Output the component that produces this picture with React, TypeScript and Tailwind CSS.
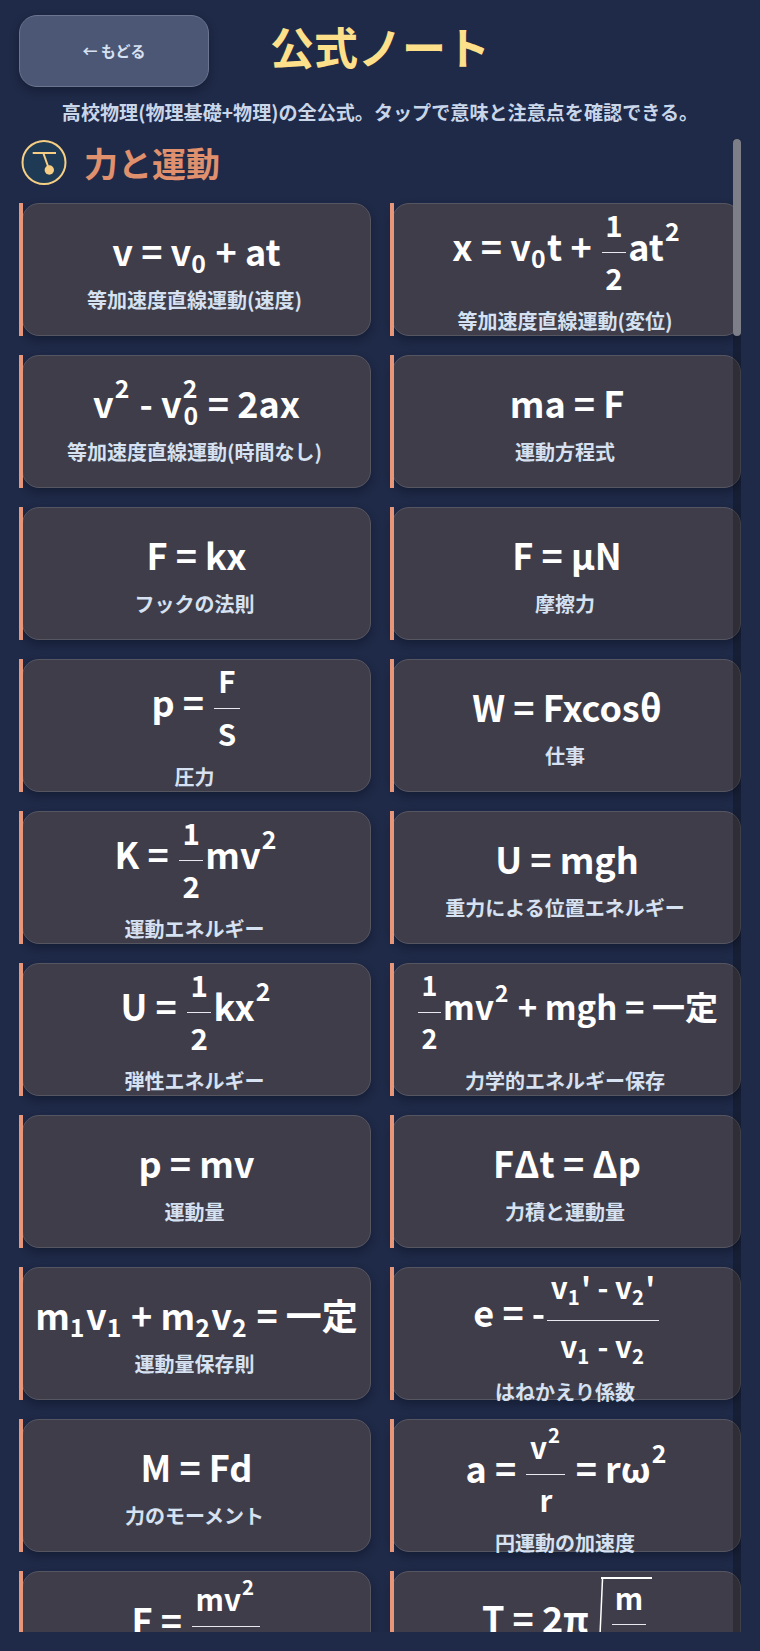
import React from 'react';

const Sub = ({ children }: { children: React.ReactNode }) => (
  <span className="mr-[1.5px] text-[0.69em] font-bold leading-[0] align-[-0.28em]">{children}</span>
);

const Sup = ({ children }: { children: React.ReactNode }) => (
  <span className="ml-[1px] mr-[2px] text-[0.69em] font-bold leading-[0] align-[0.8em]">{children}</span>
);

// numerator / denominator boxes are sized so the rule sits where the reference has it
const fracKinds = {
  plain: { wrap: 'align-[24px]', num: 'h-[46px] leading-[38px]', den: 'h-[47px] leading-[50px] -mb-[6px]' },
  sup: { wrap: 'align-[24px]', num: 'h-[58px] leading-[62px]', den: 'h-[47px] leading-[50px] -mb-[6px]' },
  sub: { wrap: 'align-[28px]', num: 'h-[57px] leading-[48px]', den: 'h-[50px] leading-[50px] -mb-[6px]' },
};

const Frac = ({ top, bottom, kind = 'plain' }: { top: React.ReactNode; bottom: React.ReactNode; kind?: keyof typeof fracKinds }) => (
  <span className={`inline-flex flex-col items-center ml-[2px] mr-[2px] text-[0.82em] ${fracKinds[kind].wrap}`}>
    <span className={`px-[3.5px] ${fracKinds[kind].num} whitespace-nowrap`}>{top}</span>
    <span className="h-px w-full bg-[#e8e8ee]" />
    <span className={`px-[3.5px] ${fracKinds[kind].den} whitespace-nowrap`}>{bottom}</span>
  </span>
);

const half = <Frac top="1" bottom="2" />;

const Card = ({ formula, label, size = 'text-[36px]' }: { formula: React.ReactNode; label: string; size?: string }) => (
  <div className="relative h-[133px]">
    <div className="ml-[2.5px] h-full rounded-[17px] border border-[#565661] bg-[#3f3d49] pr-[3px] pt-[3px] shadow-[0_4px_8px_rgba(10,15,30,0.45)] flex flex-col items-center justify-center">
      <div className={`pl-[4px] ${size} leading-[46px] font-bold text-white whitespace-nowrap`}>{formula}</div>
      <div className="mt-[12px] text-[20px] leading-[30px] font-bold text-[#d6e1f1] whitespace-nowrap">{label}</div>
    </div>
    <div className="absolute left-0 top-0 bottom-0 w-[4px] bg-[#e8967a]" />
  </div>
);

const formulas: { formula: React.ReactNode; label: string; size?: string }[] = [
  { formula: <>v = v<Sub>0</Sub> + at</>, label: '等加速度直線運動(速度)' },
  { formula: <>x = v<Sub>0</Sub>t + {half}at<Sup>2</Sup></>, label: '等加速度直線運動(変位)' },
  {
    formula: (
      <>
        v<Sup>2</Sup> - v
        <span className="ml-[1px] -mr-[14px] text-[0.69em] font-bold leading-[0] align-[0.8em]">2</span>
        <Sub>0</Sub> = 2ax
      </>
    ),
    label: '等加速度直線運動(時間なし)',
  },
  { formula: 'ma = F', label: '運動方程式' },
  { formula: 'F = kx', label: 'フックの法則' },
  { formula: 'F = μN', label: '摩擦力' },
  { formula: <>p = <Frac top="F" bottom="S" /></>, label: '圧力' },
  { formula: 'W = Fxcosθ', label: '仕事' },
  { formula: <>K = {half}mv<Sup>2</Sup></>, label: '運動エネルギー' },
  { formula: 'U = mgh', label: '重力による位置エネルギー' },
  { formula: <>U = {half}kx<Sup>2</Sup></>, label: '弾性エネルギー' },
  { formula: <>{half}mv<Sup>2</Sup> + mgh = 一定</>, label: '力学的エネルギー保存', size: 'text-[33px]' },
  { formula: 'p = mv', label: '運動量' },
  { formula: 'FΔt = Δp', label: '力積と運動量' },
  { formula: <>m<Sub>1</Sub>v<Sub>1</Sub> + m<Sub>2</Sub>v<Sub>2</Sub> = 一定</>, label: '運動量保存則' },
  { formula: <>e = -<Frac kind="sub" top={<>v<Sub>1</Sub>' - v<Sub>2</Sub>'</>} bottom={<>v<Sub>1</Sub> - v<Sub>2</Sub></>} /></>, label: 'はねかえり係数' },
  { formula: 'M = Fd', label: '力のモーメント' },
  { formula: <>a = <Frac kind="sup" top={<>v<Sup>2</Sup></>} bottom="r" /> = rω<Sup>2</Sup></>, label: '円運動の加速度' },
  { formula: <>F = <Frac kind="sup" top={<>mv<Sup>2</Sup></>} bottom="r" /></>, label: '向心力' },
  {
    formula: (
      <>
        T = 2π
        <span className="inline-flex flex-col ml-[12px] pt-[6px] text-[0.82em] align-[23px]">
          <span className="relative flex flex-col items-center border-t-2 border-white pl-[11px] pr-[6px]">
            <svg width="7" height="90" viewBox="0 0 7 90" className="absolute -left-[4px] top-0">
              <path d="M5.5 0 L1.5 90" fill="none" stroke="#fff" strokeWidth="1.5" />
            </svg>
            <span className="px-[3px] h-[45px] leading-[38px]">m</span>
            <span className="h-px w-full bg-[#e8e8ee]" />
            <span className="px-[3px] h-[41px] leading-[50px]">k</span>
          </span>
        </span>
      </>
    ),
    label: '単振り子の周期',
  },
];

export default function App() {
  return (
    <div className="h-[1651px] overflow-hidden bg-[#1f2a48] px-[19px] pt-[15px] font-['Noto_Sans_CJK_JP','Noto_Sans',sans-serif]">
      <div className="flex items-center">
        <button className="w-[190px] h-[72px] shrink-0 rounded-[18px] border border-[#6b7590] bg-[#4c5675] text-[15px] font-bold text-[#d6e1f1] shadow-[0_4px_8px_rgba(10,15,30,0.4)]">
          ← もどる
        </button>
        <h1 className="ml-[61px] mb-[10px] text-[44px] leading-[62px] font-bold text-[#ffe08a]">公式ノート</h1>
      </div>
      <p className="mt-[11px] text-center text-[19.1px] leading-[28px] font-bold text-[#c9d6ea]">
        高校物理(物理基礎+物理)の全公式。タップで意味と注意点を確認できる。
      </p>
      <div className="relative mt-[13px] h-[1493px] overflow-hidden">
        <div className="flex items-center h-[48px] gap-[17px]">
          <svg width="48" height="48" viewBox="0 0 48 48" className="shrink-0">
            <circle cx="25" cy="23.5" r="21.5" fill="#1e3a54" stroke="#f6cf85" strokeWidth="2" />
            <path d="M13.7 14 H37 M24.3 14 L30.3 31" fill="none" stroke="#f6cf85" strokeWidth="2" />
            <circle cx="30.3" cy="31" r="4.7" fill="#f6cf85" />
          </svg>
          <h2 className="text-[34px] leading-[48px] font-bold text-[#e0906c]">力と運動</h2>
        </div>
        <div className="mt-[16px] grid grid-cols-2 gap-x-[19px] gap-y-[19px]">
          {formulas.map((f, i) => (
            <Card key={i} formula={f.formula} label={f.label} size={f.size} />
          ))}
        </div>
        {/* scrollbar */}
        <div className="absolute right-0 top-0 bottom-0 w-[8px] bg-black/25" />
        <div className="absolute right-0 top-0 w-[8px] h-[197px] rounded-full bg-[#7c7f88]" />
      </div>
    </div>
  );
}
